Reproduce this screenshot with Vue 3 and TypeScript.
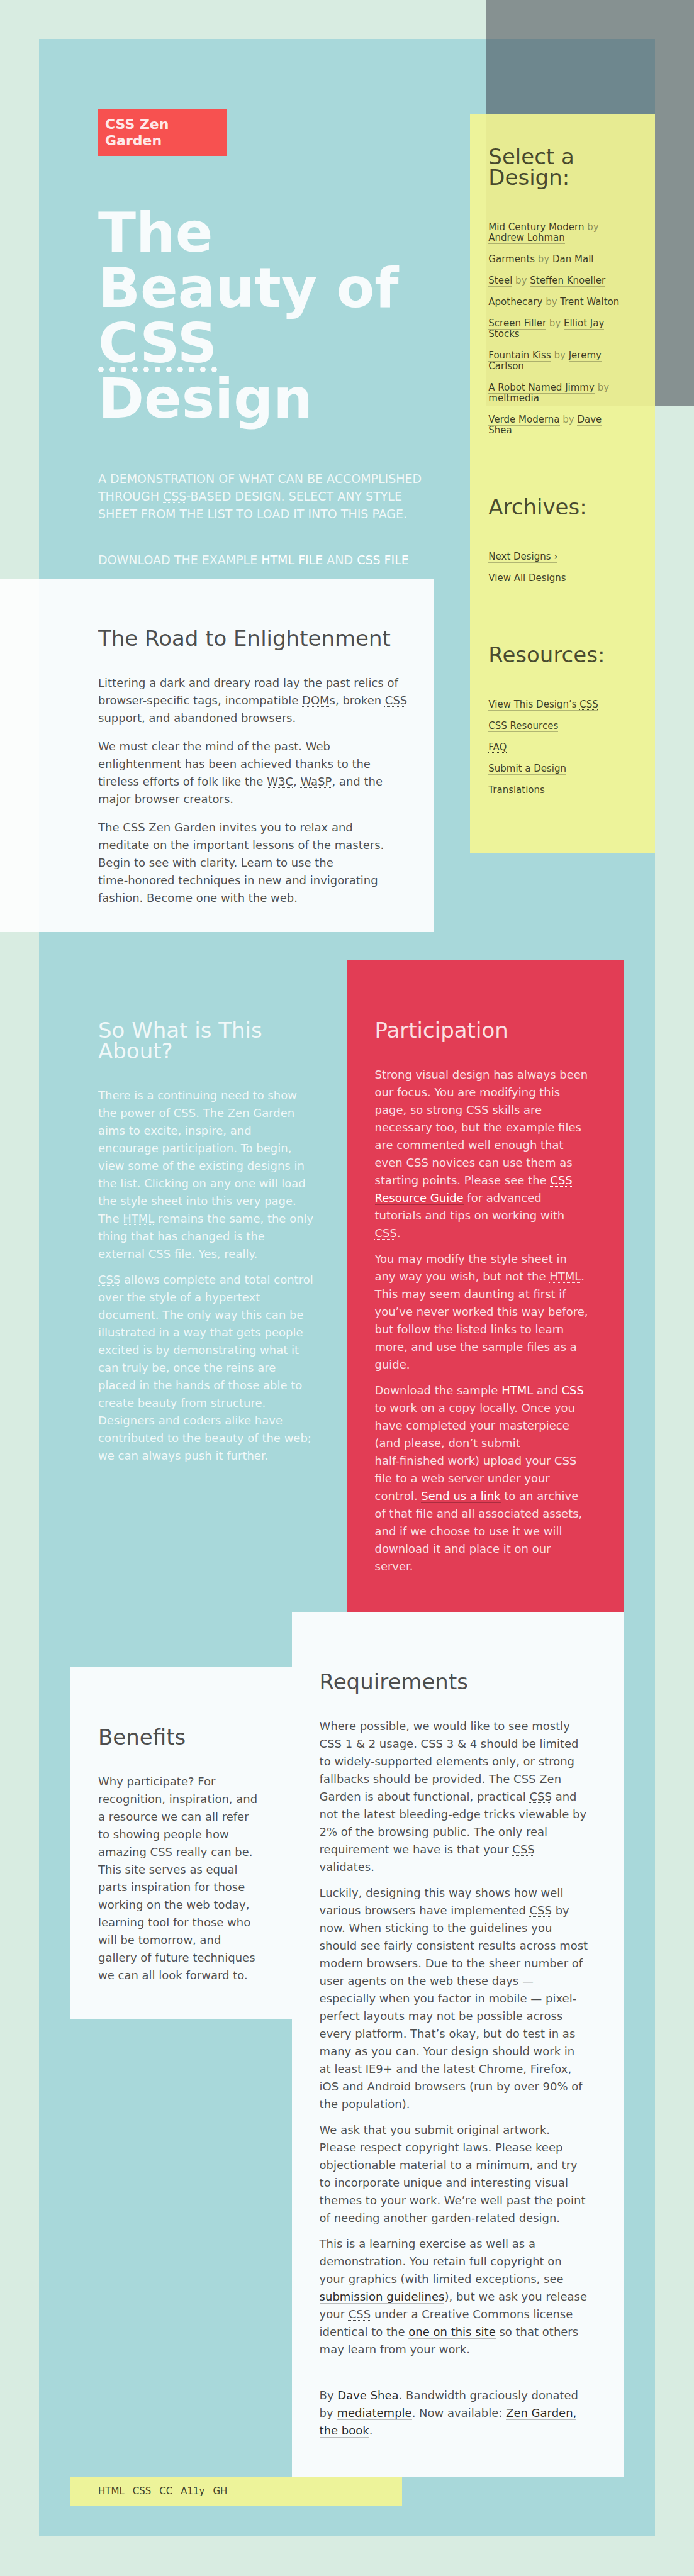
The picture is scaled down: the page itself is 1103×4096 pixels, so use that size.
<script setup lang="ts">
interface Design {
  name: string
  author: string
}

interface LinkItem {
  before?: string
  abbr?: string
  title?: string
  after?: string
}

const designs: Design[] = [
  { name: 'Mid Century Modern', author: 'Andrew Lohman' },
  { name: 'Garments', author: 'Dan Mall' },
  { name: 'Steel', author: 'Steffen Knoeller' },
  { name: 'Apothecary', author: 'Trent Walton' },
  { name: 'Screen Filler', author: 'Elliot Jay Stocks' },
  { name: 'Fountain Kiss', author: 'Jeremy Carlson' },
  { name: 'A Robot Named Jimmy', author: 'meltmedia' },
  { name: 'Verde Moderna', author: 'Dave Shea' },
]

const archives: string[] = ['Next Designs ›', 'View All Designs']

const resources: LinkItem[] = [
  { before: 'View This Design’s ', abbr: 'CSS', title: 'Cascading Style Sheets' },
  { abbr: 'CSS', title: 'Cascading Style Sheets', after: ' Resources' },
  { abbr: 'FAQ', title: 'Frequently Asked Questions' },
  { before: 'Submit a Design' },
  { before: 'Translations' },
]

const footerLinks: string[] = ['HTML', 'CSS', 'CC', 'A11y', 'GH']
</script>

<template>
  <div class="page">
    <div class="shade" aria-hidden="true"></div>
    <div class="frame">
      <div class="top">
        <div class="intro">
          <header>
            <p class="badge">CSS Zen Garden</p>
            <h1>The Beauty of <abbr title="Cascading Style Sheets">CSS</abbr> Design</h1>
          </header>
          <div class="summary">
            <p>
              A demonstration of what can be accomplished through <abbr title="Cascading Style Sheets">CSS</abbr>-based
              design. Select any style sheet from the list to load it into this page.
            </p>
            <p class="download">Download the example <a href="#">html file</a> and <a href="#">css file</a></p>
          </div>
          <section class="road">
            <h2>The Road to Enlightenment</h2>
            <p>
              Littering a dark and dreary road lay the past relics of browser-specific tags, incompatible
              <abbr title="Document Object Model">DOM</abbr>s, broken <abbr title="Cascading Style Sheets">CSS</abbr>
              support, and abandoned browsers.
            </p>
            <p>
              We must clear the mind of the past. Web enlightenment has been achieved thanks to the tireless efforts of
              folk like the <abbr title="World Wide Web Consortium">W3C</abbr>,
              <abbr title="Web Standards Project">WaSP</abbr>, and the major browser creators.
            </p>
            <p>
              The CSS Zen Garden invites you to relax and<br />
              meditate on the important lessons of the masters. Begin to see with clarity. Learn to use the
              <span class="keep">time-honored</span> techniques in new and invigorating fashion. Become one with the web.
            </p>
          </section>
        </div>

        <aside class="sidebar">
          <section>
            <h3>Select a Design:</h3>
            <ul>
              <li v-for="design in designs" :key="design.name">
                <a href="#">{{ design.name }}</a> by <a href="#">{{ design.author }}</a>
              </li>
            </ul>
          </section>
          <section>
            <h3>Archives:</h3>
            <ul>
              <li v-for="label in archives" :key="label"><a href="#">{{ label }}</a></li>
            </ul>
          </section>
          <section>
            <h3>Resources:</h3>
            <ul>
              <li v-for="(item, i) in resources" :key="i">
                <a href="#">{{ item.before }}<abbr v-if="item.abbr" :title="item.title">{{ item.abbr }}</abbr>{{ item.after }}</a>
              </li>
            </ul>
          </section>
        </aside>
      </div>

      <main class="content">
        <div class="row">
          <section class="panel about">
            <h2>So What is This About?</h2>
            <p>
              There is a continuing need to show the power of <abbr title="Cascading Style Sheets">CSS</abbr>. The Zen
              Garden aims to excite, inspire, and encourage participation. To begin, view some of the existing designs in
              the list. Clicking on any one will load the style sheet into this very page. The
              <abbr title="HyperText Markup Language">HTML</abbr> remains the same, the only thing that has changed is the
              external <abbr title="Cascading Style Sheets">CSS</abbr> file. Yes, really.
            </p>
            <p>
              <abbr title="Cascading Style Sheets">CSS</abbr> allows complete and total control over the style of a
              hypertext document. The only way this can be illustrated in a way that gets people excited is by
              demonstrating what it can truly be, once the reins are placed in the hands of those able to create beauty
              from structure. Designers and coders alike have contributed to the beauty of the web; we can always push it
              further.
            </p>
          </section>
          <section class="panel participation">
            <h2>Participation</h2>
            <p>
              Strong visual design has always been our focus. You are modifying this page, so strong
              <abbr title="Cascading Style Sheets">CSS</abbr> skills are necessary too, but the example files are
              commented well enough that even <abbr title="Cascading Style Sheets">CSS</abbr> novices can use them as
              starting points. Please see the
              <a href="#"><abbr title="Cascading Style Sheets">CSS</abbr> Resource Guide</a> for advanced tutorials and
              tips on working with <abbr title="Cascading Style Sheets">CSS</abbr>.
            </p>
            <p>
              You may modify the style sheet in any way you wish, but not the
              <abbr title="HyperText Markup Language">HTML</abbr>. This may seem daunting at first if you’ve never worked
              this way before, but follow the listed links to learn more, and use the sample files as a guide.
            </p>
            <p>
              Download the sample <a href="#">HTML</a> and <a href="#">CSS</a> to work on a copy locally. Once you have
              completed your masterpiece (and please, don’t submit <span class="keep">half-finished</span> work) upload
              your <abbr title="Cascading Style Sheets">CSS</abbr> file to a web server under your control.
              <a href="#">Send us a link</a> to an archive of that file and all associated assets, and if we choose to use
              it we will download it and place it on our server.
            </p>
          </section>
        </div>

        <div class="row">
          <section class="panel light benefits">
            <h2>Benefits</h2>
            <p>
              Why participate? For recognition, inspiration, and a resource we can all refer to showing people how
              amazing <abbr title="Cascading Style Sheets">CSS</abbr> really can be. This site serves as equal parts
              inspiration for those working on the web today, learning tool for those who will be tomorrow, and gallery of
              future techniques we can all look forward to.
            </p>
          </section>
          <section class="panel light requirements">
            <h2>Requirements</h2>
            <p>
              Where possible, we would like to see mostly
              <abbr title="Cascading Style Sheets, levels 1 and 2">CSS 1 &amp; 2</abbr> usage.
              <abbr title="Cascading Style Sheets, levels 3 and 4">CSS 3 &amp; 4</abbr> should be limited to
              widely-supported elements only, or strong fallbacks should be provided. The CSS Zen Garden is about
              functional, practical <abbr title="Cascading Style Sheets">CSS</abbr> and not the latest bleeding-edge
              tricks viewable by 2% of the browsing public. The only real requirement we have is that your
              <abbr title="Cascading Style Sheets">CSS</abbr> validates.
            </p>
            <p>
              Luckily, designing this way shows how well various browsers have implemented
              <abbr title="Cascading Style Sheets">CSS</abbr> by now. When sticking to the guidelines you should see
              fairly consistent results across most modern browsers. Due to the sheer number of user agents on the web
              these days — especially when you factor in mobile — pixel-perfect layouts may not be possible across every
              platform. That’s okay, but do test in as many as you can. Your design should work in at least IE9+ and the
              latest Chrome, Firefox, iOS and Android browsers (run by over 90% of the population).
            </p>
            <p>
              We ask that you submit original artwork. Please respect copyright laws. Please keep objectionable material
              to a minimum, and try to incorporate unique and interesting visual themes to your work. We’re well past the
              point of needing another garden-related design.
            </p>
            <p>
              This is a learning exercise as well as a demonstration. You retain full copyright on your graphics (with
              limited exceptions, see <a href="#">submission guidelines</a>), but we ask you release your
              <abbr title="Cascading Style Sheets">CSS</abbr> under a Creative Commons license identical to the
              <a href="#">one on this site</a> so that others may learn from your work.
            </p>
            <p class="credit">
              By <a href="#">Dave Shea</a>. Bandwidth graciously donated by <a href="#">mediatemple</a>. Now available:
              <a href="#">Zen Garden, the book</a>.
            </p>
          </section>
        </div>

        <footer>
          <a v-for="label in footerLinks" :key="label" href="#">{{ label }}</a>
        </footer>
      </main>
    </div>
  </div>
</template>

<style>
body {
  margin: 0;
  background: #d8ece1;
}
</style>

<style scoped>
.page {
  position: relative;
  padding: 62px;
  color: rgba(0, 0, 0, 0.7);
  font-family: Verdana, "DejaVu Sans", sans-serif;
  font-size: 18px;
  line-height: 28px;
}

.shade {
  position: absolute;
  z-index: 1;
  top: 0;
  right: 0;
  width: 30%;
  height: 645px;
  background: rgba(52, 53, 66, 0.5);
}

.frame {
  background: #a8d8da;
  padding-bottom: 48px;
}

h1,
h2,
h3,
p,
ul {
  margin: 0;
}

p + p {
  margin-top: 13px;
}

abbr {
  text-decoration: underline dotted 1px;
  text-underline-offset: 3px;
}

a {
  color: rgba(0, 0, 0, 0.85);
  text-decoration: none;
  border-bottom: 1px solid rgba(0, 0, 0, 0.25);
}

.keep {
  white-space: nowrap;
}

h2,
h3 {
  margin-bottom: 40px;
  font-size: 34px;
  font-weight: 400;
  line-height: 33px;
}

.top {
  display: flex;
  justify-content: space-between;
  align-items: flex-start;
}

.intro {
  width: 628px;
  padding-top: 112px;
}

header,
.summary {
  padding-left: 94px;
}

.badge {
  width: 182px;
  padding: 11px;
  background: #f75150;
  color: rgba(255, 255, 255, 0.9);
  font-size: 22px;
  font-weight: 700;
  line-height: 26px;
}

h1 {
  margin-top: 78px;
  color: rgba(255, 255, 255, 0.9);
  font-size: 88px;
  font-weight: 700;
  line-height: 88px;
}

h1 abbr {
  text-decoration-thickness: 9px;
  text-underline-offset: 7px;
}

.summary {
  margin-top: 69px;
  color: rgba(255, 255, 255, 0.85);
  font-size: 19px;
  text-transform: uppercase;
}

.summary .download {
  margin-top: 16px;
  padding-top: 28px;
  border-top: 1px solid #d24a62;
}

.summary a {
  color: #ffffff;
}

.road {
  margin: 17px 0 0 -62px;
  padding: 78px 0 40px 156px;
  background: rgba(255, 255, 255, 0.9);
}

.road p {
  padding-right: 37px;
}

.road p + p {
  margin-top: 17px;
}

.sidebar {
  position: relative;
  z-index: 2;
  box-sizing: border-box;
  width: 30%;
  margin-top: 119px;
  padding: 52px 49px 91px 29px;
  background: rgba(244, 246, 146, 0.9);
  color: rgba(0, 0, 0, 0.4);
  font-size: 15px;
  line-height: 17px;
}

.sidebar section + section {
  margin-top: 97px;
}

.sidebar h3 {
  margin-bottom: 54px;
  color: rgba(0, 0, 0, 0.7);
}

.sidebar ul {
  display: flex;
  flex-direction: column;
  gap: 17px;
  padding: 0;
  list-style: none;
}

.sidebar a,
footer a {
  color: rgba(0, 0, 0, 0.75);
}

.content {
  margin: 45px 50px 0;
}

.row {
  display: flex;
  align-items: flex-start;
}

.panel {
  box-sizing: border-box;
  padding: 95px 44px 58px;
}

.panel p {
  padding-right: 8px;
}

.light {
  background: rgba(255, 255, 255, 0.9);
}

.about,
.participation {
  width: 50%;
}

.about {
  color: rgba(255, 255, 255, 0.85);
}

.participation {
  background: #e23d55;
  color: rgba(255, 255, 255, 0.85);
}

.participation a {
  color: #ffffff;
}

.benefits {
  width: 40%;
  margin-top: 88px;
  padding-bottom: 56px;
}

.requirements {
  width: 60%;
  padding-bottom: 60px;
}

.requirements p {
  padding-right: 12px;
}

.requirements .credit {
  margin-top: 15px;
  padding-top: 29px;
  border-top: 1px solid #d24a62;
}

footer {
  display: flex;
  align-items: center;
  gap: 13px;
  box-sizing: border-box;
  width: 60%;
  padding: 14px 44px;
  background: rgba(244, 246, 146, 0.9);
  font-size: 15px;
  line-height: 17px;
}
</style>
